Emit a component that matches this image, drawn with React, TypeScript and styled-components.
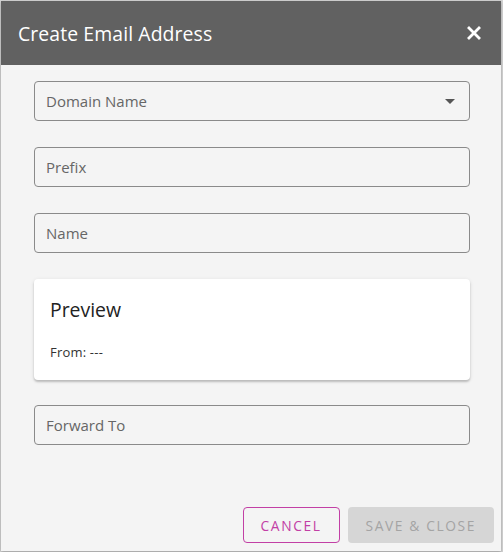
import React from 'react';
import styled, { createGlobalStyle } from 'styled-components';

const GlobalStyle = createGlobalStyle`
  html, body {
    margin: 0;
    padding: 0;
    background: #d6d6d6;
    font-family: "Open Sans", "Liberation Sans", sans-serif;
  }
  * { box-sizing: border-box; }
`;

const Page = styled.div`
  width: 503px;
  height: 552px;
  padding: 1px 2px 1px 1px;
`;

const Dialog = styled.div`
  height: 100%;
  display: flex;
  flex-direction: column;
  background: #f4f4f4;
  box-shadow: 0 1px 3px rgba(0, 0, 0, 0.3);
`;

const Header = styled.header`
  flex: 0 0 64px;
  display: flex;
  align-items: center;
  justify-content: space-between;
  padding: 0 20px 0 17px;
  background: #616161;
  color: #fff;
`;

const Title = styled.h2`
  margin: 0;
  font-size: 19.4px;
  font-weight: 400;
  letter-spacing: 0.1px;
`;

const CloseButton = styled.button`
  border: 0;
  background: none;
  padding: 0;
  display: flex;
  color: #fff;
  cursor: pointer;
`;

const Body = styled.div`
  flex: 1;
  display: flex;
  flex-direction: column;
  gap: 26px;
  padding: 16px 31px 0 33px;
`;

const Field = styled.div`
  height: 40px;
  display: flex;
  align-items: center;
  justify-content: space-between;
  padding: 0 14px 0 11px;
  border: 1px solid #8a8a8a;
  border-radius: 4px;
  font-size: 15px;
  color: #666;
`;

const Card = styled.section`
  height: 101px;
  margin: 0 0 -1px;
  padding: 17px 16px;
  background: #fff;
  border-radius: 4px;
  box-shadow: 0 2px 2px rgba(0, 0, 0, 0.18), 0 1px 4px rgba(0, 0, 0, 0.1);
`;

const CardTitle = styled.h3`
  margin: 0;
  font-size: 19.4px;
  font-weight: 400;
  color: #222;
`;

const CardText = styled.p`
  margin: 20px 0 0;
  font-size: 13px;
  letter-spacing: 0.2px;
  color: #333;
`;

const Footer = styled.footer`
  display: flex;
  justify-content: flex-end;
  gap: 8px;
  padding: 0 7px 8px 0;
`;

const Button = styled.button<{ $variant: 'outline' | 'disabled' }>`
  height: 36px;
  padding: 0 17px;
  border-radius: 4px;
  font-family: inherit;
  font-size: 13.8px;
  letter-spacing: 1.6px;
  text-transform: uppercase;
  border: 1px solid ${p => (p.$variant === 'outline' ? '#c23fa5' : 'transparent')};
  background: ${p => (p.$variant === 'outline' ? 'transparent' : '#d6d6d6')};
  color: ${p => (p.$variant === 'outline' ? '#c23fa5' : '#a4a4a4')};
`;

const Caret = () => (
  <svg width="10" height="5" viewBox="0 0 10 5">
    <path d="M0 0h10L5 5z" fill="#555" />
  </svg>
);

const CloseIcon = () => (
  <svg width="14" height="14" viewBox="0 0 14 14">
    <path d="M2 2l10 10M12 2L2 12" stroke="#fff" strokeWidth="2.8" strokeLinecap="square" />
  </svg>
);

export default function App() {
  return (
    <>
      <GlobalStyle />
      <Page>
        <Dialog>
          <Header>
            <Title>Create Email Address</Title>
            <CloseButton aria-label="Close">
              <CloseIcon />
            </CloseButton>
          </Header>
          <Body>
            <Field>
              Domain Name
              <Caret />
            </Field>
            <Field>Prefix</Field>
            <Field>Name</Field>
            <Card>
              <CardTitle>Preview</CardTitle>
              <CardText>From: ---</CardText>
            </Card>
            <Field>Forward To</Field>
          </Body>
          <Footer>
            <Button $variant="outline">Cancel</Button>
            <Button $variant="disabled" disabled>Save &amp; Close</Button>
          </Footer>
        </Dialog>
      </Page>
    </>
  );
}
